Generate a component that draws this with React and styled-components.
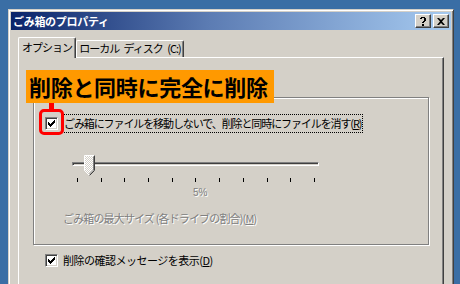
import React from "react";
import styled, { createGlobalStyle } from "styled-components";

const GlobalStyle = createGlobalStyle`
  html, body {
    margin: 0;
    padding: 0;
    background: #3a6ea5;
    overflow: hidden;
  }
  body {
    font-family: "Noto Sans CJK JP", "Liberation Sans", sans-serif;
  }
`;

const Desktop = styled.div`
  width: 460px;
  height: 284px;
  padding: 9px 0 0 8px;
  box-sizing: border-box;
  overflow: hidden;
`;

const Window = styled.div`
  width: 446px;
  height: 300px;
  box-sizing: border-box;
  background: #d4d0c8;
  border: 1px solid;
  border-color: #d4d0c8 #404040 #404040 #d4d0c8;
  box-shadow: inset 1px 1px 0 #fff, inset -1px -1px 0 #808080;
  padding: 2px;
`;

const TitleBar = styled.div`
  height: 18px;
  display: flex;
  align-items: center;
  justify-content: space-between;
  padding: 0 2px 0 2px;
  background: linear-gradient(to right, #0a246a 0%, #5c7cb3 45%, #a6caf0 100%);
`;

const TitleText = styled.div`
  color: #fff;
  font-size: 11px;
  font-weight: 700;
  letter-spacing: -0.3px;
  line-height: 18px;
`;

const TitleButtons = styled.div`
  display: flex;
  gap: 2px;
`;

const CapButton = styled.div`
  width: 16px;
  height: 14px;
  box-sizing: border-box;
  background: #d4d0c8;
  border: 1px solid;
  border-color: #fff #404040 #404040 #fff;
  box-shadow: inset -1px -1px 0 #808080;
  display: flex;
  align-items: center;
  justify-content: center;
  color: #000;
`;

const Body = styled.div`
  padding: 7px 0 0 7px;
`;

const TabRow = styled.div`
  display: flex;
  align-items: flex-end;
  height: 20px;
  position: relative;
  z-index: 1;
`;

const Tab = styled.div`
  width: ${(p) => p.$w}px;
  height: ${(p) => (p.$active ? 21 : 17)}px;
  margin-bottom: ${(p) => (p.$active ? -1 : 0)}px;
  box-sizing: border-box;
  display: flex;
  justify-content: center;
  background: #d4d0c8;
  border-top: 1px solid #fff;
  border-left: 1px solid #fff;
  border-right: 1px solid #404040;
  box-shadow: inset -1px 0 0 #808080;
  border-radius: 2px 2px 0 0;
  font-size: 11px;
  letter-spacing: -1px;
  word-spacing: 3px;
  line-height: ${(p) => (p.$active ? 18 : 15)}px;
  color: #000;
  white-space: pre;
`;

const Panel = styled.div`
  position: relative;
  width: 426px;
  height: 240px;
  box-sizing: border-box;
  border: 1px solid;
  border-color: #fff #404040 #404040 #fff;
  box-shadow: inset -1px -1px 0 #808080;
  padding: 39px 0 0 14px;
`;

const GroupBox = styled.div`
  width: 396px;
  height: 148px;
  box-sizing: border-box;
  border: 1px solid #808080;
  box-shadow: 1px 1px 0 #fff, inset 1px 1px 0 #fff;
  padding: 17px 0 0 11px;
`;

const CheckRow = styled.div`
  display: flex;
  align-items: center;
  gap: ${(p) => p.$gap || 5}px;
`;

const CheckBox = styled.div`
  width: 13px;
  height: 13px;
  box-sizing: border-box;
  background: #fff;
  border: 1px solid;
  border-color: #808080 #fff #fff #808080;
  box-shadow: inset 1px 1px 0 #404040, inset -1px -1px 0 #d4d0c8;
  display: flex;
  align-items: center;
  justify-content: center;
  flex: none;
`;

const Label = styled.span`
  font-size: 11px;
  letter-spacing: ${(p) => p.$ls ?? -0.5}px;
  line-height: 15px;
  color: ${(p) => (p.$disabled ? "#808080" : "#000")};
  text-shadow: ${(p) => (p.$disabled ? "1px 1px 0 #fff" : "none")};
  padding: 1px 1px;
  outline: ${(p) => (p.$focus ? "1px dotted #000" : "none")};
  white-space: pre;
`;

const Key = styled.span`
  text-decoration: underline;
`;

const SliderArea = styled.div`
  margin: 30px 0 0 27px;
  width: 247px;
  position: relative;
`;

const Track = styled.div`
  height: 4px;
  box-sizing: border-box;
  border: 1px solid;
  border-color: #808080 #fff #fff #808080;
  box-shadow: inset 1px 1px 0 #404040;
`;

const Thumb = styled.svg`
  position: absolute;
  left: 12px;
  top: -7px;
`;

const Ticks = styled.div`
  display: flex;
  justify-content: space-between;
  padding: 0 4px 0 5px;
  margin-top: 12px;
`;

const Tick = styled.div`
  width: 1px;
  height: 4px;
  background: #000;
`;

const Percent = styled.div`
  margin: 5px 0 0 121px;
  font-size: 10px;
  line-height: 12px;
  color: #808080;
  text-shadow: 1px 1px 0 #fff;
  font-family: "Liberation Sans", sans-serif;
`;

const SizeLabel = styled.div`
  margin: 5px 0 0 17px;
`;

const BottomCheck = styled.div`
  margin: 7px 0 0 12px;
`;

const Callout = styled.div`
  position: absolute;
  left: 7px;
  top: 12px;
  width: 248px;
  height: 33px;
  background: #ff9900;
  color: #000;
  font-size: 22px;
  font-weight: 700;
  line-height: 33px;
  padding-left: 3px;
  box-sizing: border-box;
  letter-spacing: -0.3px;
  white-space: nowrap;
`;

const Connector = styled.div`
  position: absolute;
  left: 30px;
  top: 45px;
  width: 5px;
  height: 8px;
  background: #ff0000;
`;

const Highlight = styled.div`
  position: absolute;
  left: 20px;
  top: 51px;
  width: 25px;
  height: 26px;
  box-sizing: border-box;
  border: 3px solid #ff0000;
  border-radius: 5px;
`;

const Check = () => (
  <svg width="9" height="9" viewBox="0 0 9 9">
    <path d="M1 3v3h1v1h1v1h1v-1h1v-1h1v-1h1v-1h1v-3h-1v1h-1v1h-1v1h-1v1h-1v-1h-1v-1z" fill="#000" />
  </svg>
);

const App = () => {
  const ticks = Array.from({ length: 11 });
  return (
    <Desktop>
      <GlobalStyle />
      <Window>
        <TitleBar>
          <TitleText>ごみ箱のプロパティ</TitleText>
          <TitleButtons>
            <CapButton>
              <svg width="8" height="9" viewBox="0 0 8 9">
                <path d="M1 1h1v-1h4v1h1v3h-1v1h-1v1h-2v-1h1v-1h1v-3h-2v1h-2z M3 7h2v2h-2z" fill="#000" />
              </svg>
            </CapButton>
            <CapButton>
              <svg width="8" height="7" viewBox="0 0 8 7">
                <path d="M0 0h2l2 2 2-2h2l-3 3.5 3 3.5h-2l-2-2-2 2h-2l3-3.5z" fill="#000" />
              </svg>
            </CapButton>
          </TitleButtons>
        </TitleBar>
        <Body>
          <TabRow>
            <Tab $active $w={58}>オプション</Tab>
            <Tab $w={108}>ローカル ディスク (C:)</Tab>
          </TabRow>
          <Panel>
            <GroupBox>
              <CheckRow>
                <CheckBox>
                  <Check />
                </CheckBox>
                <Label $focus $ls={-1.1}>
                  ごみ箱にファイルを移動しないで、削除と同時にファイルを消す(<Key>R</Key>)
                </Label>
              </CheckRow>
              <SliderArea>
                <Track />
                <Thumb width="11" height="21" viewBox="0 0 11 21">
                  <defs>
                    <pattern id="dither" width="2" height="2" patternUnits="userSpaceOnUse">
                      <rect width="2" height="2" fill="#fff" />
                      <rect width="1" height="1" fill="#d4d0c8" />
                      <rect x="1" y="1" width="1" height="1" fill="#d4d0c8" />
                    </pattern>
                  </defs>
                  <path d="M0.5 0.5h10v15l-5 5l-5-5z" fill="url(#dither)" stroke="#fff" />
                  <path d="M10.5 0.5v15l-5 5" fill="none" stroke="#404040" />
                  <path d="M9.5 1.5v13.5l-4 4" fill="none" stroke="#808080" />
                </Thumb>
                <Ticks>
                  {ticks.map((_, i) => (
                    <Tick key={i} />
                  ))}
                </Ticks>
                <Percent>5%</Percent>
              </SliderArea>
              <SizeLabel>
                <Label $disabled $ls={-0.85}>
                  ごみ箱の最大サイズ (各ドライブの割合)(<Key>M</Key>)
                </Label>
              </SizeLabel>
            </GroupBox>
            <BottomCheck>
              <CheckRow $gap={4}>
                <CheckBox>
                  <Check />
                </CheckBox>
                <Label $ls={-0.5}>
                  削除の確認メッセージを表示(<Key>D</Key>)
                </Label>
              </CheckRow>
            </BottomCheck>
            <Callout>削除と同時に完全に削除</Callout>
            <Connector />
            <Highlight />
          </Panel>
        </Body>
      </Window>
    </Desktop>
  );
};

export default App;
